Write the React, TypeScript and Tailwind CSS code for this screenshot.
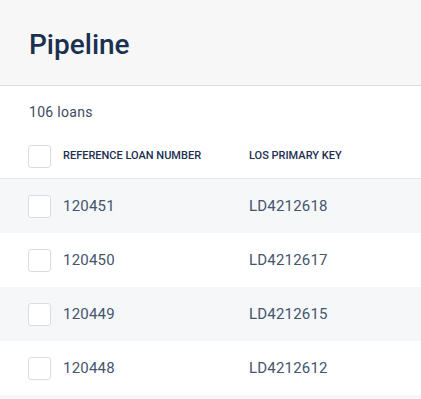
const rows = [
  { ref: "120451", key: "LD4212618" },
  { ref: "120450", key: "LD4212617" },
  { ref: "120449", key: "LD4212615" },
  { ref: "120448", key: "LD4212612" },
]

function Checkbox() {
  return <div className="w-[23px] h-[23px] shrink-0 rounded-[3px] border border-[#d9dde3] bg-white" />
}

export default function App() {
  return (
    <div className="w-[421px] h-[399px] overflow-hidden bg-white font-['Roboto',sans-serif]">
      {/* Page header */}
      <div className="h-[86px] bg-[#f7f7f8] border-b border-[#dcdce1] px-[29px] pt-[27px]">
        <h1 className="text-[28px] leading-[36px] font-medium text-[#1b3050]">Pipeline</h1>
      </div>

      <div className="px-[29px] pt-[16px] text-[14px] leading-[20px] tracking-[0.3px] text-[#3d4b5e]">106 loans</div>

      {/* Table */}
      <div className="mt-[12px]">
        <div className="h-[45px] flex items-center px-[28px] border-b border-[#e5e8ec]">
          <Checkbox />
          <div className="w-[186px] ml-[12px] text-[11px] font-medium uppercase text-[#1b3050]">
            Reference Loan Number
          </div>
          <div className="text-[11px] font-medium uppercase text-[#1b3050]">LOS Primary Key</div>
        </div>
        {rows.map((r, i) => (
          <div
            key={r.ref}
            className={`h-[54px] flex items-center px-[28px] ${i % 2 === 0 ? "bg-[#f5f7f9]" : "bg-white"}`}
          >
            <Checkbox />
            <div className="w-[186px] ml-[12px] text-[15px] tracking-[0.2px] text-[#44556c]">{r.ref}</div>
            <div className="text-[15px] tracking-[0.2px] text-[#44556c]">{r.key}</div>
          </div>
        ))}
        <div className="h-[54px] bg-[#f5f7f9]" />
      </div>
    </div>
  )
}
